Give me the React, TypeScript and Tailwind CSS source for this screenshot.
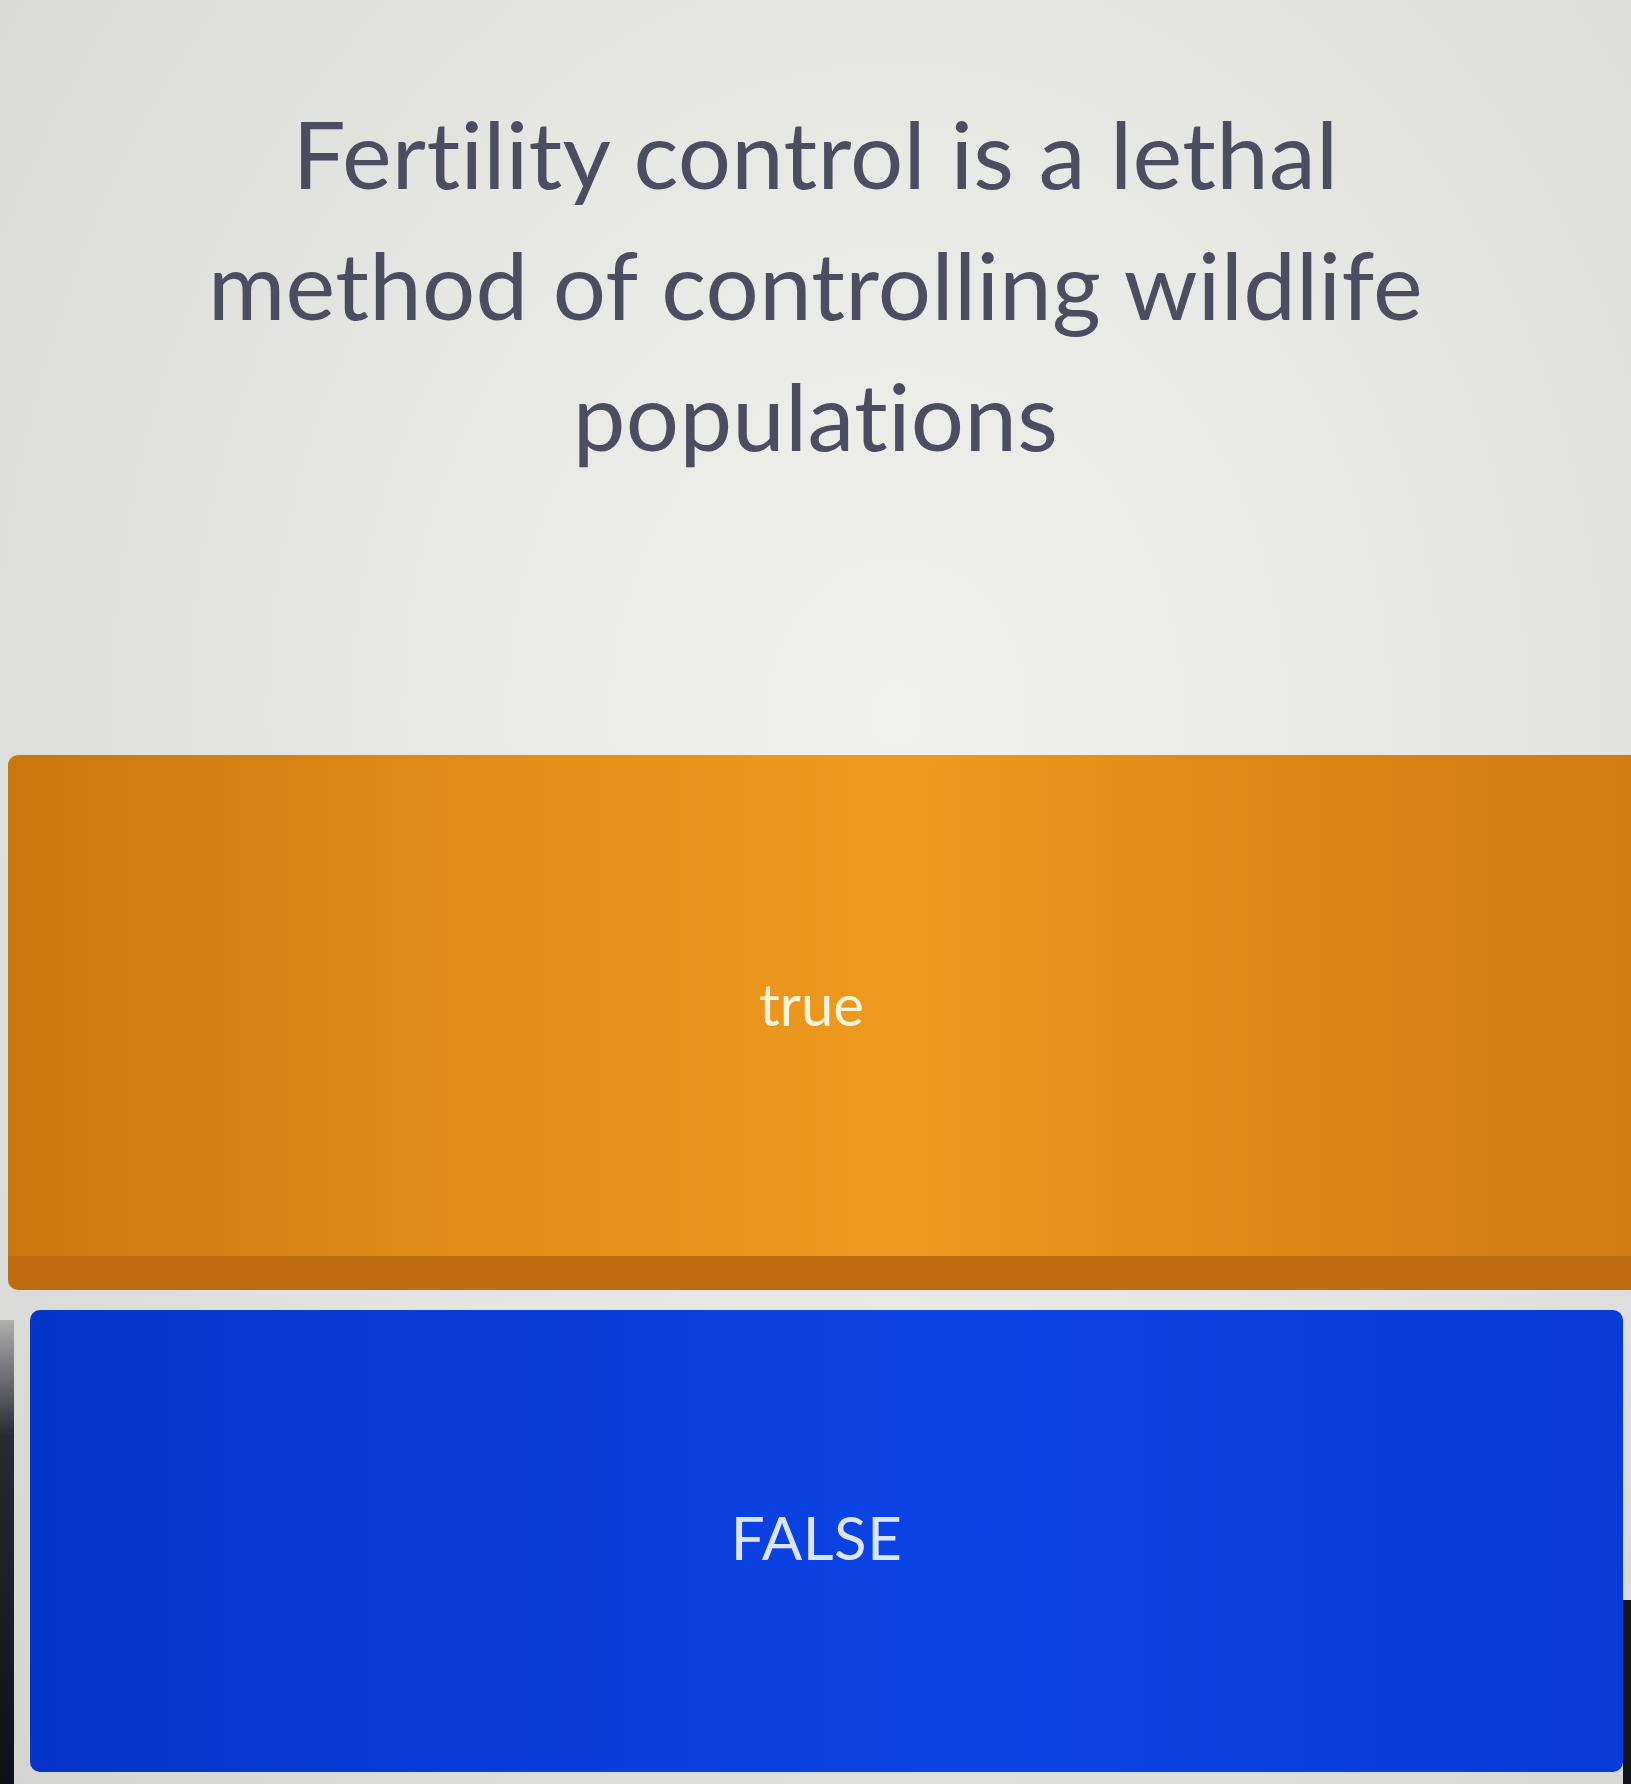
import React from "react";

export default function App() {
  return (
    <div className="relative w-full min-h-[1784px] overflow-hidden bg-[radial-gradient(ellipse_at_55%_40%,#f1f1ee_0%,#e6e6e3_45%,#d4d4d2_100%)] font-['Lato','Noto_Sans',sans-serif]">
      <div className="pt-[87px] h-[755px] text-center text-[#4d4d62] text-[94px] leading-[131px] tracking-[0.3px]">
        <div>Fertility control is a lethal</div>
        <div>method of controlling wildlife</div>
        <div>populations</div>
      </div>

      <div className="ml-[8px] h-[535px] rounded-tl-[10px] rounded-bl-[10px] border-b-[34px] border-[#bf6c10] bg-[linear-gradient(90deg,#c8780e_0%,#e28e18_30%,#ee9a1e_55%,#dc8614_80%,#d07c12_100%)] flex items-center justify-center pr-[16px]">
        <span className="text-[58px] leading-none text-[#fff3dc] pb-[4px]">true</span>
      </div>

      <div className="mt-[20px] ml-[30px] mr-[8px] h-[462px] rounded-[10px] bg-[linear-gradient(90deg,#0634c8_0%,#0a3edb_35%,#0b44e6_60%,#083bd8_100%)] flex items-center justify-center pr-[20px] pb-[8px]">
        <span className="text-[60px] leading-none text-[#dbe4ff] tracking-[0.5px]">FALSE</span>
      </div>

      <div className="absolute left-0 top-[1320px] bottom-0 w-[14px] bg-[linear-gradient(180deg,#b0b0b0_0%,#2a2a34_25%,#101018_100%)]" />
      <div className="absolute right-0 top-[1600px] bottom-0 w-[8px] bg-[#15151c]" />
    </div>
  );
}
